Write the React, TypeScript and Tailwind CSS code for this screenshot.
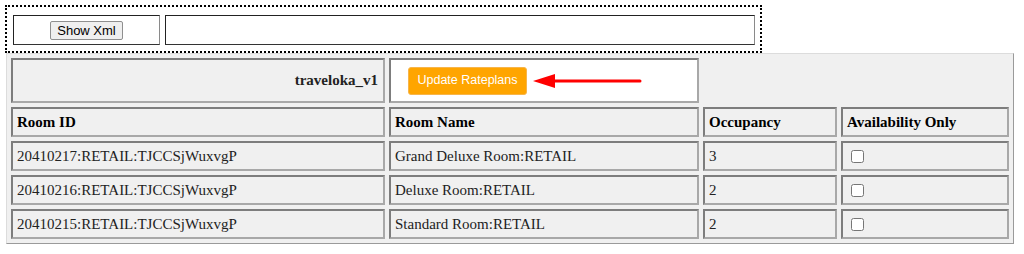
const rooms = [
  { id: "20410217:RETAIL:TJCCSjWuxvgP", name: "Grand Deluxe Room:RETAIL", occ: "3" },
  { id: "20410216:RETAIL:TJCCSjWuxvgP", name: "Deluxe Room:RETAIL", occ: "2" },
  { id: "20410215:RETAIL:TJCCSjWuxvgP", name: "Standard Room:RETAIL", occ: "2" },
]

const cell =
  "flex items-center pl-[4px] border-2 border-t-[#7d7d7d] border-l-[#7d7d7d] border-r-[#a8a8a8] border-b-[#a8a8a8]"

const App = () => {
  return (
    <div className="w-[1024px] h-[254px] bg-white font-['Liberation_Serif',serif] text-[15px] text-[#222] overflow-hidden">
      {/* xml toolbar */}
      <div className="ml-[5px] mt-[5px] w-[757px] h-[48px] border-2 border-dotted border-black flex gap-[5px] pl-[6px] pr-[5px] pt-[8px] pb-[6px]">
        <div className="w-[147px] h-[30px] bg-white flex items-center justify-center border border-t-[#222] border-l-[#222] border-b-[#333] border-r-[#8a8a8a]">
          <button className="h-[19px] px-[6px] bg-[#efefef] border border-[#8f8f8f] rounded-[2px] font-['Liberation_Sans',Arial,sans-serif] text-[13px] leading-none text-black">
            Show Xml
          </button>
        </div>
        <div className="w-[590px] h-[30px] bg-white border border-t-[#222] border-l-[#222] border-b-[#333] border-r-[#8a8a8a]"></div>
      </div>

      {/* rateplan table */}
      <div className="ml-[6px] w-[1008px] bg-[#f0f0f0] border border-t-[#dcdcdc] border-l-[#dcdcdc] border-r-[#9a9a9a] border-b-[#9a9a9a] p-[4px] grid grid-cols-[374px_310px_134px_168px] grid-rows-[45px_30px_30px_30px_30px] gap-[4px]">
        <div className={cell + " justify-end pr-[5px] font-bold"}>traveloka_v1</div>
        <div className={cell + " bg-white pl-[17px]"}>
          <button className="h-[28px] w-[119px] bg-[#ffa500] border border-[#f7b54a] rounded-[3px] font-['Liberation_Sans',Arial,sans-serif] text-[12.5px] text-white leading-none">
            Update Rateplans
          </button>
          <svg width="112" height="18" viewBox="0 0 112 18" className="ml-[5px]">
            <line x1="20" y1="9" x2="108" y2="9" stroke="#f00" strokeWidth="3" strokeLinecap="round" />
            <polygon points="1,9 23,2 23,16" fill="#f00" />
          </svg>
        </div>
        <div className="col-span-2"></div>

        <div className={cell + " font-bold text-black"}>Room ID</div>
        <div className={cell + " font-bold text-black"}>Room Name</div>
        <div className={cell + " font-bold text-black"}>Occupancy</div>
        <div className={cell + " font-bold text-black"}>Availability Only</div>

        {rooms.map((r) => (
          <>
            <div key={r.id + "a"} className={cell}>{r.id}</div>
            <div key={r.id + "b"} className={cell}>{r.name}</div>
            <div key={r.id + "c"} className={cell}>{r.occ}</div>
            <div key={r.id + "d"} className={cell}>
              <input type="checkbox" className="ml-[4px] w-[13px] h-[13px]" />
            </div>
          </>
        ))}
      </div>
    </div>
  )
}

export default App
